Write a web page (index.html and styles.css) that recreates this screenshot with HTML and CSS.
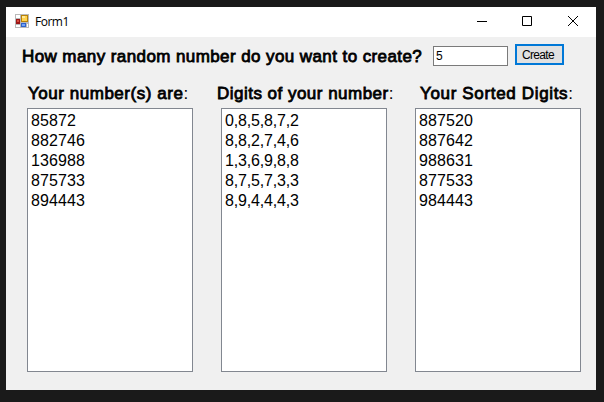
FILE: index.html
```html
<!DOCTYPE html>
<html lang="en">
<head>
<meta charset="utf-8">
<title>Form1</title>
<link rel="stylesheet" href="styles.css">
</head>
<body>
<div class="window">
  <header class="titlebar">
    <svg class="app-icon" width="14" height="14" viewBox="0 0 14 14" shape-rendering="crispEdges">
      <path fill="#b9b9b9" d="M0 0h14v14H0z"/>
      <path fill="#fff" d="M1 1h4v3H1zM1 11h4v2H1zM12 10h1v3h-1z"/>
      <path fill="#9c1717" d="M1 5h4v5H1z"/><path fill="#d94a3c" d="M2 6h2v2H2z"/>
      <path fill="#b98206" d="M6 1h7v7H6z"/><path fill="#ffd34f" d="M7 2h5v5H7z"/><path fill="#ffe99a" d="M7 2h3v2H7z"/>
      <path fill="#2e62cc" d="M6 9h5v4H6z"/><path fill="#74a4f5" d="M7 10h3v2H7z"/>
    </svg>
    <span class="title">Form1</span>
    <div class="controls">
      <svg width="46" height="30" viewBox="0 0 46 30"><path d="M19 14.500h10"/></svg>
      <svg width="46" height="30" viewBox="0 0 46 30"><path d="M18.500 9.500h9v9h-9z"/></svg>
      <svg width="46" height="30" viewBox="0 0 46 30"><path d="M18 9l10 10M28 9l-10 10"/></svg>
    </div>
  </header>
  <main class="form">
    <div class="prompt">
      <label class="caption question" for="count">How many random number do you want to create?</label>
      <input id="count" class="count" value="5">
      <button class="create">Create</button>
    </div>
    <div class="columns">
      <section class="column">
        <h2 class="caption first">Your number(s) are<span class="colon">:</span></h2>
        <ul class="list"><li>85872</li><li>882746</li><li>136988</li><li>875733</li><li>894443</li></ul>
      </section>
      <section class="column">
        <h2 class="caption second">Digits of your number<span class="colon">:</span></h2>
        <ul class="list commas"><li>0,8,5,8,7,2</li><li>8,8,2,7,4,6</li><li>1,3,6,9,8,8</li><li>8,7,5,7,3,3</li><li>8,9,4,4,4,3</li></ul>
      </section>
      <section class="column">
        <h2 class="caption third">Your Sorted Digits<span class="colon">:</span></h2>
        <ul class="list"><li>887520</li><li>887642</li><li>988631</li><li>877533</li><li>984443</li></ul>
      </section>
    </div>
  </main>
</div>
</body>
</html>
```
FILE: styles.css
```css
* { box-sizing: border-box; }
body {
  margin: 0;
  height: 402px;
  padding: 7px 8px 12px 6px;
  background: #1a1a1a;
  color: #000;
  font-family: "Liberation Sans", Arial, sans-serif;
  overflow: hidden;
}
.window { height: 383px; background: #f0f0f0; }
.titlebar { display: flex; height: 30px; background: #fff; padding-left: 9px; }
.app-icon { margin-top: 7px; }
.title { margin-left: 6px; font: 12px/30px "Open Sans", sans-serif; letter-spacing: -0.5px; }
.controls { display: flex; margin-left: auto; }
.controls path { fill: none; stroke: #000; stroke-width: 1; }
.form { padding: 7px 15px 0 16px; }
.prompt { display: flex; height: 22px; }
.caption {
  margin: 0;
  font-size: 17px;
  font-weight: 400;
  line-height: 20px;
  white-space: nowrap;
  -webkit-text-stroke: 0.8px #000;
}
.colon { -webkit-text-stroke: 0; }
.question { width: 411px; padding-top: 3px; letter-spacing: 0.41px; }
.count {
  width: 75px;
  height: 20px;
  margin-top: 2px;
  padding: 0 2px;
  border: 1px solid #7a7a7a;
  font: 12px "Liberation Sans", sans-serif;
}
.create {
  width: 49px;
  height: 21px;
  margin-left: 7px;
  padding: 0 3px 0 0;
  border: 2px solid #0078d7;
  background: #e1e1e1;
  font: 12px "Liberation Sans", sans-serif;
  letter-spacing: -0.7px;
}
.columns { display: flex; gap: 28px; padding: 18px 0 0 5px; }
.column { width: 166px; }
.column .caption { height: 24px; }
.first { padding-left: 1px; letter-spacing: 0.53px; }
.second { margin-left: -4px; letter-spacing: 0.48px; }
.third { padding-left: 5px; letter-spacing: 0.66px; }
.list {
  height: 264px;
  margin: 0;
  padding: 2px 3px;
  border: 1px solid #828790;
  background: #fff;
  list-style: none;
  font-size: 16px;
  line-height: 20px;
  letter-spacing: 0.1px;
}
.commas { letter-spacing: -0.18px; }
```
